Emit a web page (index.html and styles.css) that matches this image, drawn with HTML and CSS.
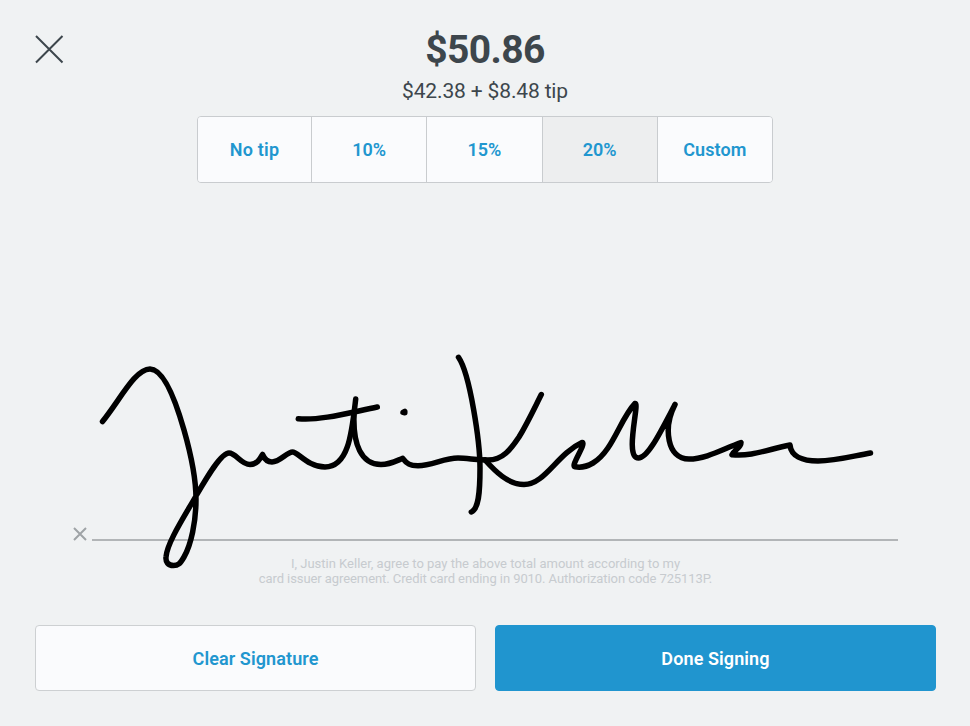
FILE: index.html
```html
<!DOCTYPE html>
<html lang="en">
<head>
<meta charset="utf-8">
<title>Sign to pay</title>
<link rel="stylesheet" href="styles.css">
</head>
<body>
<main class="screen">
  <header class="header">
    <button class="close" aria-label="Close">
      <svg width="30" height="30" viewBox="0 0 30 30"><path d="M2 2 28.500 28.500M28.500 2 2 28.500"/></svg>
    </button>
    <div class="amount">
      <h1 class="total">$50.86</h1>
      <p class="breakdown">$42.38 + $8.48 tip</p>
    </div>
  </header>
  <div class="tips">
    <button class="tip no-tip">No tip</button>
    <button class="tip">10%</button>
    <button class="tip">15%</button>
    <button class="tip selected">20%</button>
    <button class="tip custom">Custom</button>
  </div>
  <section class="pad">
    <div class="baseline">
      <svg class="mark" width="14" height="14" viewBox="0 0 14 14"><path d="M1 1 13 13M13 1 1 13"/></svg>
      <span class="rule"></span>
    </div>
    <svg class="signature" width="970" height="400" viewBox="0 183 970 400">
      <path d="M102.5 421.5C120 400 135 369 150 369C164 369 176 402 184 430C192 458 196 478 196 499C196 522 191 545 184 557C180 564 178 565.5 173.500 565.500C168 565.500 165.500 562 166 557C167 543 184 517 196 496C207 477 221 453 229 453C236 453 241 464.500 250 464.500C257 464.500 260 459 262.500 454.500C265 460 268 462 272 462C280 462 287 452 292.500 452C298 452 308 467 325 467C349 467 352 431 355.700 399"/>
      <path d="M354 415C353 444 361 464.500 381 464.500C390 464.500 396 461 402.700 458.300C407 464 410 465.700 418 465.700C432 465.700 444 458 458 458C468 458 475 460 488 460C503 460 511 449 519 437C527 424 534 409 541.300 394.500"/>
      <path d="M298.300 418.700C320 421 352 412 377.300 407"/>
      <path d="M403 412.300 404.800 411.300V412.700Z"/>
      <path d="M458.500 357.300C470 374 480 442 480 468C480 494 478.500 509 471.300 512"/>
      <path d="M485 460C495 471 508 484.500 524 484.500C545 484.500 557 454 582 442.500C587 443 570 466 575 466.800C581 468 587 466.500 593 463C613 451 620 419 635 403.500C640 402 624 458 638.500 458C648 458 661 431 675 404.500C663 428 667 459 689 459C706 459 723 449 741 442.500C741 448 735 449 732 454.700C751 457 769 449 790 445C791 456 802 461 818 461C836 461 853 456 870.500 453"/>
    </svg>
  </section>
  <p class="terms"><span class="terms-first">I, Justin Keller, agree to pay the above total amount according to my</span><br><span class="terms-second">card issuer agreement. Credit card ending in 9010. Authorization code 725113P.</span></p>
  <footer class="actions">
    <button class="action clear">Clear Signature</button>
    <button class="action done">Done Signing</button>
  </footer>
</main>
</body>
</html>
```
FILE: styles.css
```css
* { box-sizing: border-box; }
body, h1, p { margin: 0; }
body {
  background: #f0f2f3;
  color: #3d464c;
  font-family: Roboto, "Liberation Sans", sans-serif;
}
button {
  margin: 0;
  padding: 0;
  font: inherit;
}
svg {
  display: block;
  fill: none;
}
.screen {
  display: flex;
  flex-direction: column;
  width: 970px;
  height: 726px;
}
.header {
  display: grid;
  grid-template-columns: 1fr auto 1fr;
  height: 116px;
  padding: 26px 34px 0;
}
.close {
  width: 30px;
  height: 30px;
  margin-top: 8px;
  border: 0;
  background: none;
}
.close path {
  stroke: #3d464c;
  stroke-width: 2;
}
.amount { text-align: center; }
.total {
  padding-top: 1px;
  font-size: 39px;
  line-height: 46px;
  font-weight: 700;
  letter-spacing: -.6px;
}
.breakdown {
  margin-top: 4px;
  font-size: 21px;
  line-height: 28px;
  letter-spacing: -.15px;
}
.tips {
  display: flex;
  width: 576px;
  height: 67px;
  margin-left: 197px;
  overflow: hidden;
  border: 1px solid #c9cccf;
  border-radius: 4px;
}
.tip {
  flex: 1;
  border: 0;
  border-right: 1px solid #c9cccf;
  background: #fafbfd;
  color: #2196cf;
  font-size: 18px;
  font-weight: 600;
}
.tip:last-child { border-right: 0; }
.no-tip {
  flex: 0 0 114px;
  letter-spacing: .2px;
}
.custom { letter-spacing: .1px; }
.tip.selected { background: #edeeef; }
.pad {
  position: relative;
  height: 373px;
  padding: 344px 72px 0 73px;
}
.baseline {
  display: flex;
  align-items: flex-start;
  gap: 5px;
}
.mark path {
  stroke: #9fa3a6;
  stroke-width: 2;
}
.rule {
  flex: 1;
  height: 2px;
  margin-top: 12px;
  background: #b2b5b7;
}
.signature {
  position: absolute;
  top: 0;
  left: 0;
}
.signature path {
  stroke: #000;
  stroke-width: 5.5;
  stroke-linecap: round;
  stroke-linejoin: round;
}
.terms {
  height: 69px;
  padding-left: 1px;
  color: #c7cbcf;
  font-size: 13px;
  line-height: 15px;
  text-align: center;
}
.terms-second { letter-spacing: -.08px; }
.actions {
  display: flex;
  gap: 19px;
  padding: 0 34px 0 35px;
}
.action {
  flex: 1;
  height: 66px;
  border: 1px solid #cdd0d2;
  border-radius: 4px;
  font-size: 18px;
  font-weight: 600;
  letter-spacing: .1px;
}
.clear {
  background: #fafbfd;
  color: #2196cf;
}
.done {
  border-color: #2095cf;
  background: #2095cf;
  color: #fff;
}
```
